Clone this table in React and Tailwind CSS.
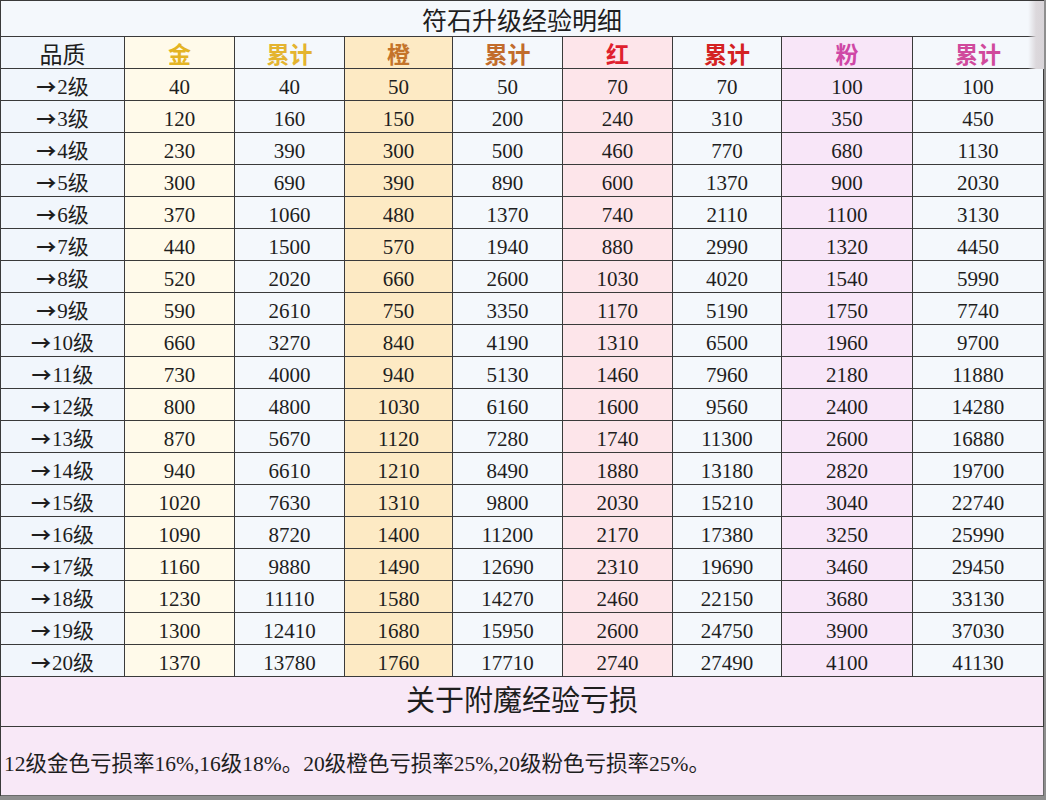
import React from "react";

const FONT = { fontFamily: '"Liberation Serif", "Noto Sans CJK SC", serif' };

const cols = [
  { name: "金", bg: "bg-[#fffaea]", color: "text-[#e4b424]", data: [40,120,230,300,370,440,520,590,660,730,800,870,940,1020,1090,1160,1230,1300,1370] },
  { name: "累计", bg: "bg-[#f4f8fc]", color: "text-[#e4b430]", data: [40,160,390,690,1060,1500,2020,2610,3270,4000,4800,5670,6610,7630,8720,9880,11110,12410,13780] },
  { name: "橙", bg: "bg-[#fdeac4]", color: "text-[#c4742a]", data: [50,150,300,390,480,570,660,750,840,940,1030,1120,1210,1310,1400,1490,1580,1680,1760] },
  { name: "累计", bg: "bg-[#f4f8fc]", color: "text-[#c26c2c]", data: [50,200,500,890,1370,1940,2600,3350,4190,5130,6160,7280,8490,9800,11200,12690,14270,15950,17710] },
  { name: "红", bg: "bg-[#fde5ea]", color: "text-[#e0202e]", data: [70,240,460,600,740,880,1030,1170,1310,1460,1600,1740,1880,2030,2170,2310,2460,2600,2740] },
  { name: "累计", bg: "bg-[#f4f8fc]", color: "text-[#d42222]", data: [70,310,770,1370,2110,2990,4020,5190,6500,7960,9560,11300,13180,15210,17380,19690,22150,24750,27490] },
  { name: "粉", bg: "bg-[#f8e6f8]", color: "text-[#cf48a6]", data: [100,350,680,900,1100,1320,1540,1750,1960,2180,2400,2600,2820,3040,3250,3460,3680,3900,4100] },
  { name: "累计", bg: "bg-[#f4f8fc]", color: "text-[#d04a9c]", data: [100,450,1130,2030,3130,4450,5990,7740,9700,11880,14280,16880,19700,22740,25990,29450,33130,37030,41130] },
];

const levels = Array.from({ length: 19 }, (_, i) => i + 2);

export default function App() {
  return (
    <div className="w-[1046px] h-[800px] bg-[#8e8e8e] overflow-hidden" style={FONT}>
      <div className="w-[1044px] border-l border-t border-[#3a3a3a] text-[#1e1e1e]">
        <div className="relative">
          <div className="h-[36px] bg-[#f4f8fc] border-b border-r border-[#3a3a3a] flex items-center justify-center pt-[5px] text-[25px] leading-none">
            符石升级经验明细
          </div>
          <div className="grid grid-cols-[124px_110px_110px_108px_110px_110px_109px_131px_131px] h-[32px]">
            <div className="bg-[#f1f6fc] border-b border-r border-[#3a3a3a] flex items-center justify-center pt-[5px] text-[23px] leading-none">品质</div>
            {cols.map((c, i) => (
              <div key={i} className={`${c.bg} ${c.color} border-b border-r border-[#3a3a3a] flex items-center justify-center pt-[5px] text-[23px] leading-none font-bold`}>
                {c.name}
              </div>
            ))}
          </div>
          <div className="absolute right-0 top-0 w-[16px] h-[68px] bg-gradient-to-r from-[#eeeef2]/0 via-[#dcd8dc] to-[#d8d4d8]" />
        </div>
        {levels.map((lv, r) => (
          <div key={lv} className="grid grid-cols-[124px_110px_110px_108px_110px_110px_109px_131px_131px] h-[32px]">
            <div className="bg-[#f1f6fc] border-b border-r border-[#3a3a3a] flex items-center justify-center pt-[5px] text-[21px] leading-none">
              <span className="font-['Noto_Sans_CJK_SC'] text-[20px] font-bold mr-[1px]">→</span>
              {lv}级
            </div>
            {cols.map((c, i) => (
              <div key={i} className={`${c.bg} border-b border-r border-[#3a3a3a] flex items-center justify-center pt-[5px] text-[21px] leading-none`}>
                {c.data[r]}
              </div>
            ))}
          </div>
        ))}
        <div className="h-[50px] bg-[#f8e8f7] border-b border-r border-[#3a3a3a] flex items-center justify-center text-[29px] leading-none">
          关于附魔经验亏损
        </div>
        <div className="h-[69px] bg-[#f8e8f7] border-b border-r border-[#6a6a6a] flex items-center pl-[3px] pt-[8px] text-[21.5px] leading-none whitespace-nowrap">
          12级金色亏损率16%,16级18%。20级橙色亏损率25%,20级粉色亏损率25%。
        </div>
      </div>
    </div>
  );
}
